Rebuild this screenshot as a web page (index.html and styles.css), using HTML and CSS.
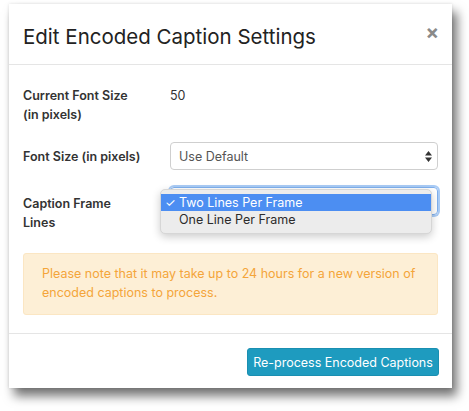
FILE: index.html
```html
<!DOCTYPE html>
<html>
<head>
<meta charset="utf-8">
<link rel="stylesheet" href="styles.css">
</head>
<body>
<div class="modal">
  <div class="modal-header">
    <h4 class="title">Edit Encoded Caption Settings</h4>
    <span class="close">&times;</span>
  </div>
  <div class="modal-body">
    <div class="row row-current">
      <div class="label">Current Font Size<br>(in pixels)</div>
      <div class="value">50</div>
    </div>
    <div class="row row-size">
      <div class="label">Font Size (in pixels)</div>
      <div class="select">
        <span>Use Default</span>
        <svg class="arrows" width="7" height="11" viewBox="0 0 7 11"><path d="M3.5 0L7 4.5H0z M3.5 11L0 6.5H7z" fill="#333"/></svg>
      </div>
    </div>
    <div class="row row-lines">
      <div class="label">Caption Frame<br>Lines</div>
      <div class="select focus">
        <span>Two Lines Per Frame</span>
        <svg class="arrows" width="7" height="11" viewBox="0 0 7 11"><path d="M3.5 0L7 4.5H0z M3.5 11L0 6.5H7z" fill="#333"/></svg>
        <div class="menu">
          <div class="opt selected"><span class="check">✓</span>Two Lines Per Frame</div>
          <div class="opt"><span class="check"></span>One Line Per Frame</div>
        </div>
      </div>
    </div>
    <div class="alert">Please note that it may take up to 24 hours for a new version of encoded captions to process.</div>
  </div>
  <div class="modal-footer">
    <button class="btn">Re-process Encoded Captions</button>
  </div>
</div>
</body>
</html>
```
FILE: styles.css
```css
html, body {
  margin: 0;
  padding: 0;
  background: #fff;
}
body {
  font-family: Inter, "Noto Sans", sans-serif;
  color: #333;
  width: 469px;
  height: 411px;
  overflow: hidden;
}
.modal {
  margin: 4px 0 0 9px;
  width: 443px;
  height: 384px;
  background: #fff;
  box-shadow: 5px 8px 10px rgba(0,0,0,0.55), 0 0 3px rgba(0,0,0,0.12);
  display: flex;
  flex-direction: column;
}
.modal-header {
  height: 60px;
  flex: none;
  border-bottom: 1px solid #e5e5e5;
  display: flex;
  justify-content: space-between;
  align-items: flex-start;
  padding: 0 14px;
}
.title {
  margin: 20px 0 0 0;
  font-size: 20.5px;
  font-weight: 400;
  line-height: 26px;
  color: #222;
}
.close {
  margin-top: 15px;
  margin-right: -1px;
  font-size: 20px;
  font-weight: 700;
  color: #8a8a8a;
  line-height: 26px;
}
.modal-body {
  height: 268px;
  flex: none;
  border-bottom: 1px solid #e5e5e5;
  padding: 0 14px;
  font-size: 12.5px;
}
.row {
  display: flex;
}
.label {
  width: 147px;
  flex: none;
  font-weight: 600;
  line-height: 19px;
  color: #333;
}
.row-current {
  padding-top: 21px;
}
.value {
  line-height: 19px;
  color: #333;
}
.row-size {
  margin-top: 18px;
  align-items: center;
}
.select {
  position: relative;
  flex: 1;
  height: 26px;
  border: 1px solid #cfcfcf;
  border-radius: 4px;
  display: flex;
  align-items: center;
  justify-content: space-between;
  padding: 0 5px 0 8px;
  color: #555;
  font-size: 12.5px;
}
.arrows {
  display: block;
}
.row-lines {
  margin-top: 17px;
}
.row-lines .label {
  padding-top: 7px;
}
.select.focus {
  border-color: #7fb0ee;
  box-shadow: 0 0 0 2px #a9cbf5;
}
.menu {
  position: absolute;
  left: -11px;
  top: 1px;
  width: 270px;
  background: #ececec;
  border: 1px solid #d6d6d6;
  border-radius: 5px;
  box-shadow: 0 3px 8px rgba(0,0,0,0.2);
  padding: 4px 0 5px;
  z-index: 2;
}
.opt {
  height: 17px;
  line-height: 17px;
  display: flex;
  align-items: center;
  color: #2b2b2b;
  font-size: 12.5px;
}
.opt.selected {
  background: #4c8ef2;
  color: #fff;
}
.check {
  width: 18px;
  padding-left: 4px;
  box-sizing: border-box;
  font-size: 12px;
}
.alert {
  margin-top: 21px;
  background: #fdefd6;
  border: 1px solid #fbe6c3;
  border-radius: 3px;
  color: #f4a53a;
  padding: 11px 18px 12px;
  line-height: 18.5px;
  font-size: 12.5px;
}
.modal-footer {
  flex: 1;
  display: flex;
  justify-content: flex-end;
  align-items: flex-start;
  padding: 14px 13px 0 14px;
}
.btn {
  height: 28px;
  width: 192px;
  background: #1e9bbf;
  border: 1px solid #1a8fb1;
  border-radius: 3px;
  color: #fff;
  font-family: Inter, "Noto Sans", sans-serif;
  font-size: 12.5px;
  padding: 0;
}
```
